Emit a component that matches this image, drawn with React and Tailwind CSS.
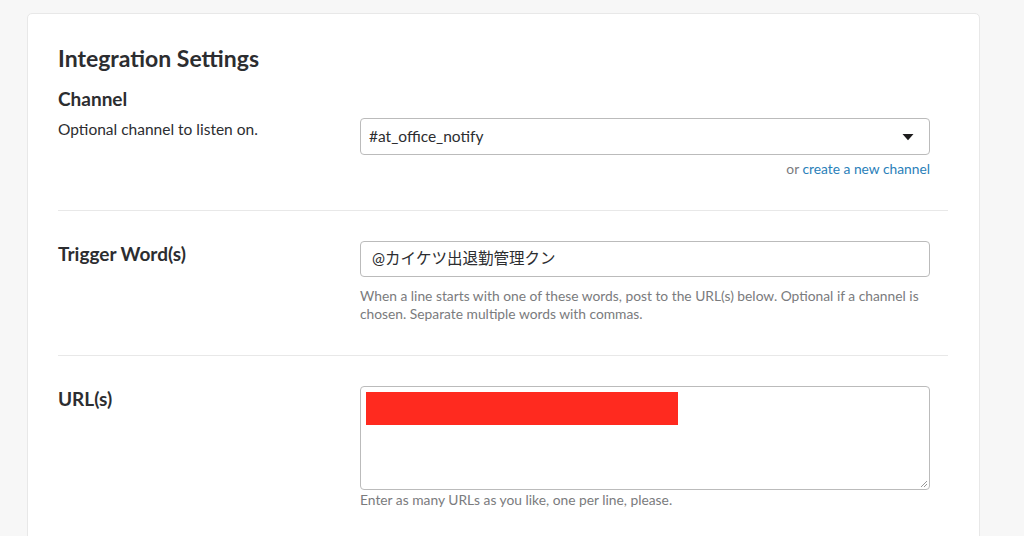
import React from 'react'

const Caret = () => (
  <svg width="12" height="8" viewBox="0 0 12 8" className="fill-[#1d1c1d]">
    <path d="M0.5 1h11L6 7.2z" />
  </svg>
)

const App = () => {
  return (
    <div className="h-[536px] bg-[#f7f7f7] pl-[27px] pt-[13px] overflow-hidden font-['Lato','Noto_Sans_CJK_JP',sans-serif]">
      <div className="w-[953px] bg-white border border-[#e8e8e8] rounded-[5px] pl-[30px] pr-[31px] pt-[29px] pb-10 text-[#2c2d30]">
        {/* Title */}
        <h2 className="text-[23px] leading-[30px] font-bold">Integration Settings</h2>

        {/* Channel */}
        <div className="grid grid-cols-[302px_570px] pt-[14px] pb-[32px] border-b border-[#e8e8e8]">
          <div>
            <h3 className="text-[19px] leading-[24px] font-bold">Channel</h3>
            <p className="text-[15.5px] leading-[22px] mt-[7px]">Optional channel to listen on.</p>
          </div>
          <div className="pt-[31px]">
            <div className="h-[37px] border border-[#bbbbbb] rounded-[4px] flex items-center justify-between pl-[8px] pr-[15px] text-[15.5px]">
              <span>#at_office_notify</span>
              <Caret />
            </div>
            <p className="text-[13.8px] leading-[18px] mt-[5px] text-right text-[#7a7b7d]">
              or <span className="text-[#2a80b9]">create a new channel</span>
            </p>
          </div>
        </div>

        {/* Trigger words */}
        <div className="grid grid-cols-[302px_570px] pt-[30px] pb-[32px] border-b border-[#e8e8e8]">
          <h3 className="text-[19px] leading-[24px] font-bold pt-[1px]">Trigger Word(s)</h3>
          <div>
            <div className="h-[36px] border border-[#bbbbbb] rounded-[4px] flex items-center pl-[11px] text-[15.5px]">
              @カイケツ出退勤管理クン
            </div>
            <p className="text-[13.8px] leading-[18px] mt-[10px] text-[#7a7b7d]">
              When a line starts with one of these words, post to the URL(s) below. Optional if a channel is chosen. Separate multiple words with commas.
            </p>
          </div>
        </div>

        {/* URLs */}
        <div className="grid grid-cols-[302px_570px] pt-[30px]">
          <h3 className="text-[19px] leading-[24px] font-bold pt-[1px]">URL(s)</h3>
          <div>
            <div className="relative h-[104px] border border-[#bbbbbb] rounded-[4px] p-[5px]">
              <div className="w-[312px] h-[33px] bg-[#ff2a1f]" />
              <svg width="8" height="8" viewBox="0 0 8 8" className="absolute right-[1px] bottom-[1px] stroke-[#999]">
                <path d="M1 7L7 1M4 7L7 4" strokeWidth="1" />
              </svg>
            </div>
            <p className="text-[13.8px] leading-[18px] mt-[1px] text-[#7a7b7d]">
              Enter as many URLs as you like, one per line, please.
            </p>
          </div>
        </div>
      </div>
    </div>
  )
}

export default App
